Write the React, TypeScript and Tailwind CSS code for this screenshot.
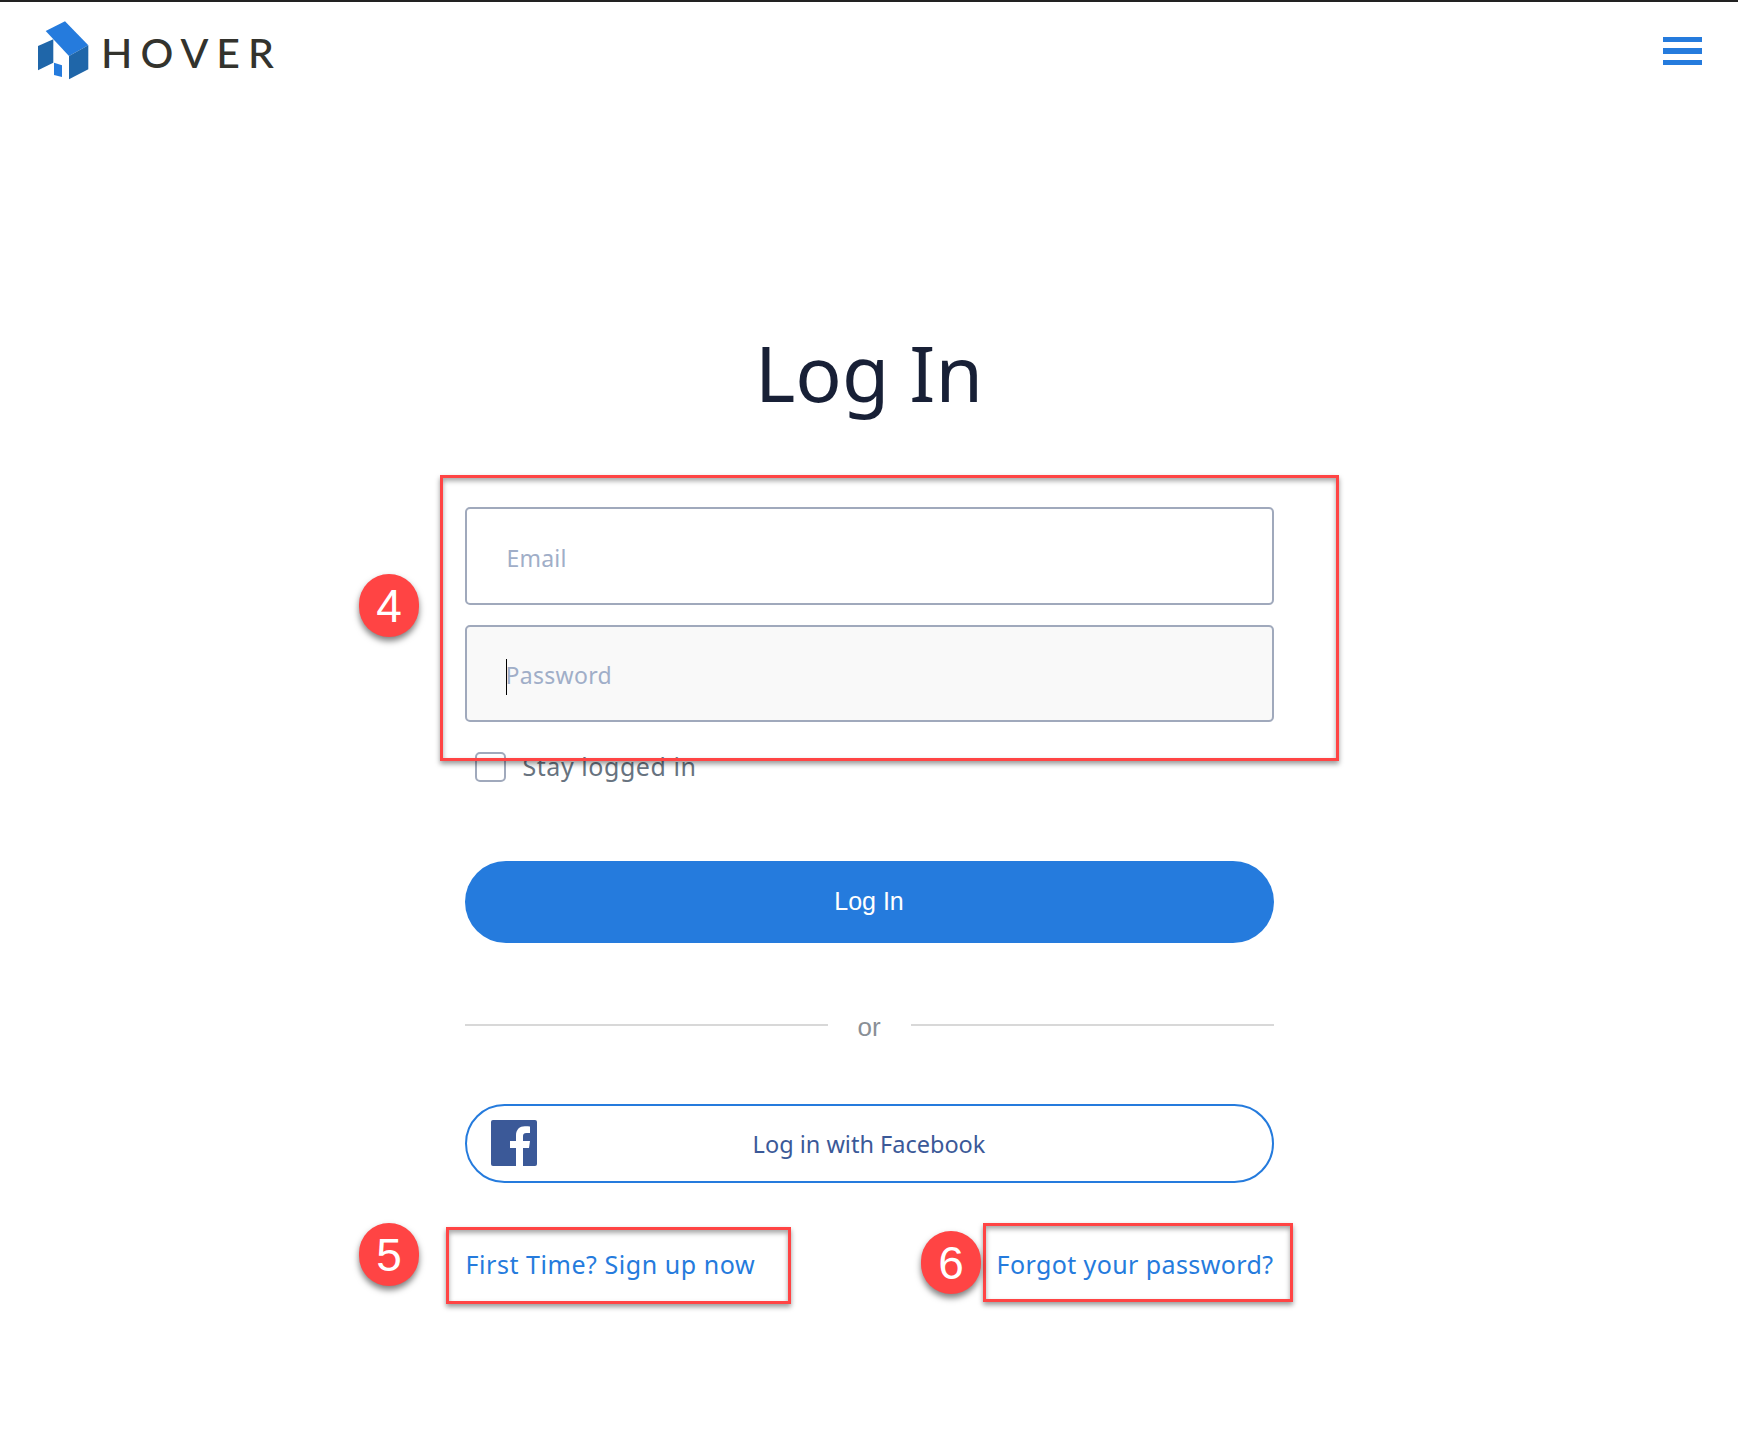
const font = "font-['Noto_Sans',sans-serif]";

function Logo() {
  return (
    <div className="flex items-center">
      <svg width="52" height="60" viewBox="0 0 52 60" className="shrink-0">
        <polygon points="7.7,10 27,0.3 50.3,24.3 31,35" fill="#257bdd" />
        <polygon points="0,25 15.3,18.3 15.3,41.7 0,49.3" fill="#1f66a9" />
        <polygon points="31,35 50.3,24.3 50.3,48.3 31,58.3" fill="#1f66a9" />
        <polygon points="16,41.7 24,44.3 24,56 16,54" fill="#257bdd" />
      </svg>
      <span className="ml-[11px] mt-[2px] font-['Lato',sans-serif] text-[41px] font-medium leading-none tracking-[8px] text-[#33332d]">
        HOVER
      </span>
    </div>
  );
}

function Marker({ n, className }: { n: number; className: string }) {
  return (
    <div
      className={`absolute flex h-[63px] w-[60px] items-center justify-center rounded-full bg-[#ff4444] font-['Liberation_Sans',sans-serif] text-[46px] leading-none text-white shadow-[0_4px_6px_rgba(0,0,0,0.5)] ${className}`}
    >
      {n}
    </div>
  );
}

function Callout({ className }: { className: string }) {
  return (
    <div
      className={`absolute border-[3px] border-[#ff4444] shadow-[0_3px_5px_rgba(0,0,0,0.4),inset_0_3px_5px_rgba(0,0,0,0.35)] ${className}`}
    />
  );
}

export default function App() {
  return (
    <div className={`relative h-[1429px] w-[1738px] overflow-hidden bg-white ${font}`}>
      <div className="h-[2px] bg-[#222222]" />
      <header className="flex items-start justify-between pl-[38px] pr-[36px] pt-[19px]">
        <Logo />
        <div className="mt-[16px] flex w-[39px] flex-col gap-[6px]">
          <div className="h-[5px] bg-[#257bdd]" />
          <div className="h-[6px] bg-[#257bdd]" />
          <div className="h-[5px] bg-[#257bdd]" />
        </div>
      </header>

      <main className="mx-auto mt-[243px] flex w-[809px] flex-col">
        <h1 className="text-center text-[77px] leading-[98px] text-[#182036]">Log In</h1>

        <div className="mt-[85px] flex h-[98px] items-center rounded-[5px] border-2 border-[#a0a9bc] pl-[40px] pt-[4px] text-[23px] tracking-[0.2px] text-[#a0aec8]">
          Email
        </div>
        <div className="mt-[20px] flex h-[97px] items-center rounded-[5px] border-2 border-[#a0a9bc] bg-[#f9f9f9] pl-[39px] pt-[3px] text-[23px] tracking-[0.3px] text-[#a0aec8]">
          <span className="relative">
            <span className="absolute left-0 top-[1px] h-[36px] w-[1.5px] bg-black" />
            Password
          </span>
        </div>

        <div className="mt-[30px] flex h-[30px] items-center pl-[10px]">
          <div className="h-[30px] w-[31px] rounded-[5px] border-2 border-[#a0a9bc]" />
          <span className="ml-[17px] text-[25px] tracking-[0.55px] text-[#68737f]">Stay logged in</span>
        </div>

        <button className="mt-[79px] h-[82px] rounded-full bg-[#257bdd] font-['Liberation_Sans',sans-serif] text-[25px] text-white">
          Log In
        </button>

        <div className="mt-[63px] flex items-center">
          <div className="h-[2px] flex-1 bg-[#d8d8d8]" />
          <span className="w-[83px] pt-[5px] text-center font-['Liberation_Sans',sans-serif] text-[26px] leading-[32px] text-[#8a8f96]">
            or
          </span>
          <div className="h-[2px] flex-1 bg-[#d8d8d8]" />
        </div>

        <button className="relative mt-[61px] h-[79px] rounded-full border-2 border-[#257bdd] pt-[2px] text-[23.500px] text-[#3b5998]">
          <span className="absolute left-[24px] top-[14px] block h-[46px] w-[46px]">
            <svg width="46" height="46" viewBox="0 0 46 46">
              <rect width="46" height="46" rx="2" fill="#3b5998" />
              <path d="M32 46V28h6l1-7h-7v-4.500c0-2 .6-3.500 3.500-3.500H39V6.500C38.300 6.400 36.200 6.200 33.800 6.200 28.700 6.200 25 9.300 25 15.500V21h-6v7h6v18z" fill="#fff" />
            </svg>
          </span>
          Log in with Facebook
        </button>

        <div className="mt-[64px] flex justify-between text-[25px] leading-[34px] text-[#257bdd]">
          <a className="pl-[1px] tracking-[0.55px]">First Time? Sign up now</a>
          <a className="tracking-[0.4px]">Forgot your password?</a>
        </div>
      </main>

      <Callout className="left-[440px] top-[475px] h-[286px] w-[899px]" />
      <Callout className="left-[446px] top-[1227px] h-[77px] w-[345px]" />
      <Callout className="left-[983px] top-[1223px] h-[79px] w-[310px]" />
      <Marker n={4} className="left-[359px] top-[574px]" />
      <Marker n={5} className="left-[359px] top-[1223px]" />
      <Marker n={6} className="left-[921px] top-[1231px]" />
    </div>
  );
}
